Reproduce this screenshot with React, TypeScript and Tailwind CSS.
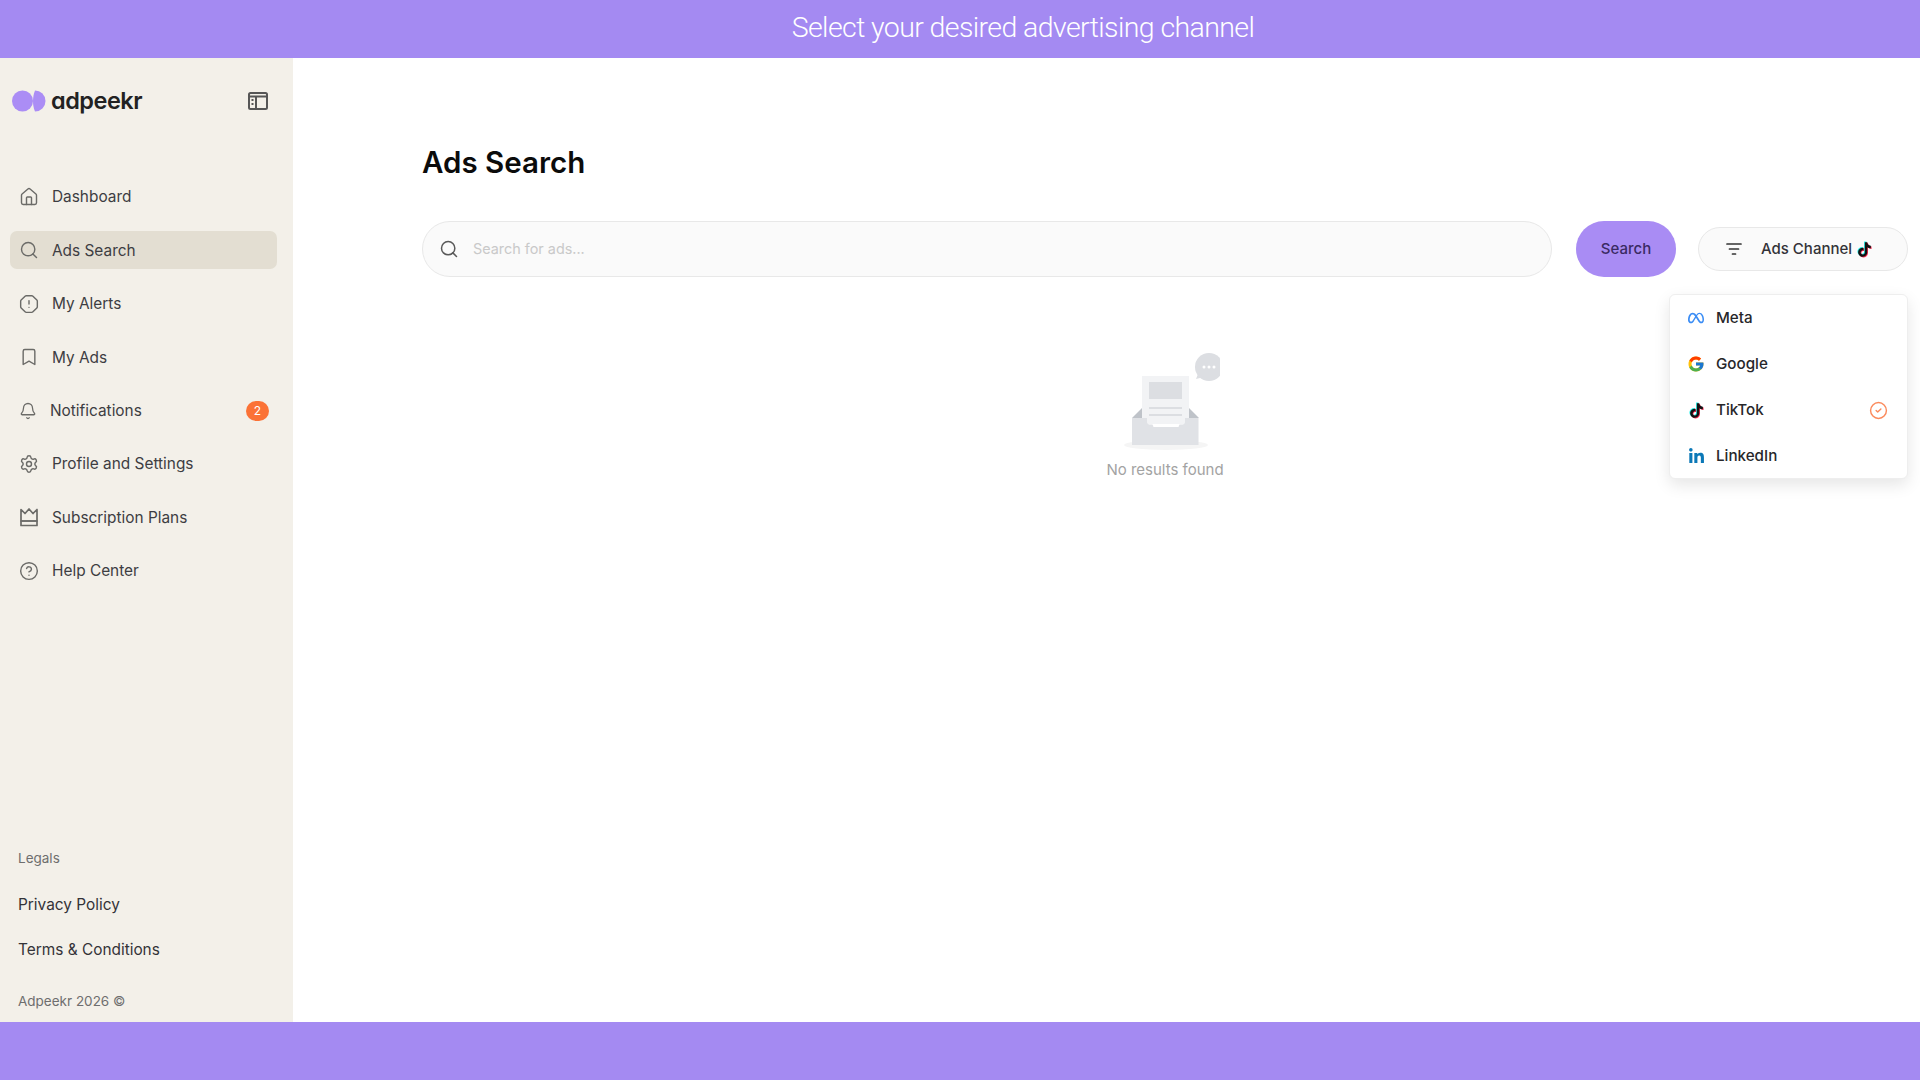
import React from 'react';
import { House, Search, OctagonAlert, Bookmark, Bell, Settings, CircleHelp, CircleCheck } from 'lucide-react';
import { FcGoogle } from 'react-icons/fc';
import { FaLinkedinIn } from 'react-icons/fa';
import { SiMeta } from 'react-icons/si';

const tiktokPath =
  'M12.525.02c1.31-.02 2.61-.01 3.91-.02.08 1.53.63 3.09 1.75 4.17 1.12 1.11 2.7 1.62 4.24 1.79v4.03c-1.44-.05-2.89-.35-4.2-.97-.57-.26-1.1-.59-1.62-.93-.01 2.92.01 5.84-.02 8.75-.08 1.4-.54 2.79-1.35 3.94-1.31 1.92-3.58 3.17-5.91 3.21-1.43.08-2.86-.31-4.08-1.03-2.02-1.19-3.44-3.37-3.65-5.71-.02-.5-.03-1-.01-1.49.18-1.9 1.12-3.72 2.58-4.96 1.66-1.44 3.98-2.13 6.15-1.72.02 1.48-.04 2.96-.04 4.44-.99-.32-2.15-.23-3.02.37-.63.41-1.11 1.04-1.36 1.75-.21.51-.15 1.07-.14 1.61.24 1.64 1.82 3.02 3.5 2.87 1.12-.01 2.19-.66 2.77-1.61.19-.33.4-.67.41-1.06.1-1.79.06-3.57.07-5.36.01-4.03-.01-8.05.02-12.07z';

const TikTokIcon = () => (
  <svg viewBox="-2 -2 28 28" className="w-[17px] h-[17px] shrink-0">
    <path d={tiktokPath} fill="#25f4ee" transform="translate(-1.2 -1)" />
    <path d={tiktokPath} fill="#fe2c55" transform="translate(1.2 1)" />
    <path d={tiktokPath} fill="#111111" />
  </svg>
);

const Logo = () => (
  <svg viewBox="0 0 34 22" className="w-[34px] h-[22px] shrink-0">
    <circle cx="10.5" cy="11" r="10.5" fill="#ab8df5" />
    <path d="M23 .5A10.500 10.500 0 0 1 23 21.500C21.500 18 21 14.500 21 11S21.500 4 23 .5z" fill="#ab8df5" />
  </svg>
);

const PanelIcon = () => (
  <svg viewBox="0 0 20 18" fill="none" className="w-[20px] h-[18px]" stroke="#565656" strokeWidth="2">
    <rect x="1" y="1" width="18" height="16" rx="1.500" />
    <path d="M1 4.500h18M8 4.500V17" />
    <path d="M3.500 8h2M3.500 12h2" />
  </svg>
);

const CrownBox = ({ className }: { className?: string }) => (
  <svg viewBox="0 0 20 20" fill="none" stroke="currentColor" strokeWidth="1.700" strokeLinejoin="round" className={className}>
    <path d="M2 2.500l4 4 4-4.500 4 4.500 4-4v11.500H2z" />
    <path d="M2 14h16v4.500H2z" />
  </svg>
);

const FilterIcon = () => (
  <svg viewBox="0 0 16 12" fill="none" stroke="#333333" strokeWidth="1.700" strokeLinecap="round" className="w-[16px] h-[12px]">
    <path d="M1 1h14M3.500 6h9M6.500 11h3" />
  </svg>
);

const EmptyIllustration = () => (
  <svg viewBox="-10 0 110 100" className="w-[110px] h-[100px]">
    <ellipse cx="46" cy="95" rx="42" ry="5" fill="#f5f5f5" />
    <circle cx="89" cy="17" r="14" fill="#dcdee2" />
    <path d="M78 24l-2 5 8-2z" fill="#dcdee2" />
    <circle cx="84" cy="17" r="1.500" fill="#ffffff" />
    <circle cx="89" cy="17" r="1.500" fill="#ffffff" />
    <circle cx="94" cy="17" r="1.500" fill="#ffffff" />
    <path d="M22 58L12 68h67L69 58z" fill="#bfc3c9" />
    <rect x="22" y="26" width="47" height="48" fill="#f2f3f5" />
    <rect x="29" y="32" width="33" height="17" fill="#dcdee2" />
    <rect x="29" y="57" width="33" height="2" fill="#dcdee2" />
    <rect x="29" y="64" width="33" height="2" fill="#dcdee2" />
    <path d="M12 68h15v4c0 1.500 1 2.500 2.500 2.500h3l1 2.500h25l1-2.500h3c1.500 0 2.500-1 2.500-2.500v-4h13.500v27H12z" fill="#e0e2e6" />
  </svg>
);

const navItems = [
  { label: 'Dashboard', icon: <House className="w-[20px] h-[20px]" strokeWidth={1.7} /> },
  { label: 'Ads Search', icon: <Search className="w-[20px] h-[20px]" strokeWidth={1.7} />, active: true },
  { label: 'My Alerts', icon: <OctagonAlert className="w-[20px] h-[20px]" strokeWidth={1.7} /> },
  { label: 'My Ads', icon: <Bookmark className="w-[20px] h-[20px]" strokeWidth={1.7} /> },
  { label: 'Notifications', icon: <Bell className="w-[18px] h-[18px]" strokeWidth={1.7} />, badge: 2 },
  { label: 'Profile and Settings', icon: <Settings className="w-[20px] h-[20px]" strokeWidth={1.7} /> },
  { label: 'Subscription Plans', icon: <CrownBox className="w-[20px] h-[20px]" /> },
  { label: 'Help Center', icon: <CircleHelp className="w-[20px] h-[20px]" strokeWidth={1.7} /> },
];

const channels = [
  { label: 'Meta', icon: <SiMeta className="w-[16px] h-[16px] text-[#3b8df5]" /> },
  { label: 'Google', icon: <FcGoogle className="w-[18px] h-[18px] ml-[-1px]" /> },
  { label: 'TikTok', icon: <TikTokIcon />, selected: true },
  { label: 'LinkedIn', icon: <FaLinkedinIn className="w-[17px] h-[17px] text-[#0b78b7]" /> },
];

const Sidebar = () => (
  <aside className="w-[293px] shrink-0 bg-[#f3f0e9] flex flex-col">
    <div className="flex items-center justify-between pl-[12px] pr-[25px] pt-[31px]">
      <div className="flex items-center gap-[5px]">
        <Logo />
        <span className="font-['Inter',sans-serif] [font-feature-settings:'cv11'] font-semibold text-[23.5px] leading-[24px] tracking-[-0.5px] text-[#222222]">adpeekr</span>
      </div>
      <PanelIcon />
    </div>

    <nav className="flex flex-col gap-[15.4px] mt-[65px] ml-[10px] mr-[16px]">
      {navItems.map((item) => (
        <div
          key={item.label}
          className={`h-[38px] flex items-center pl-[9px] pr-[8px] rounded-[7px] text-[15.4px] text-[#3d3d42] ${item.active ? 'bg-[#e3ded2]' : ''}`}
        >
          <span className="mr-[13px] shrink-0 text-[#6b6b68]">{item.icon}</span>
          <span className="flex-1">{item.label}</span>
          {item.badge && (
            <span className="w-[23px] h-[20px] rounded-full bg-[#fb7236] text-white text-[12px] flex items-center justify-center">{item.badge}</span>
          )}
        </div>
      ))}
    </nav>

    <div className="mt-auto px-[18px] pb-[11px] flex flex-col">
      <span className="text-[13.5px] leading-[20px] text-[#6e6e6e]">Legals</span>
      <span className="text-[15.4px] leading-[20px] text-[#333338] mt-[26.5px]">Privacy Policy</span>
      <span className="text-[15.4px] leading-[20px] text-[#333338] mt-[25px]">Terms &amp; Conditions</span>
      <span className="text-[13.5px] leading-[20px] text-[#6e6e6e] mt-[31.5px]">Adpeekr 2026 ©</span>
    </div>
  </aside>
);

const ChannelMenu = () => (
  <div className="absolute right-[12px] top-[236px] w-[239px] h-[185px] bg-white border border-[#eeeeee] rounded-[6px] shadow-[0_6px_16px_rgba(0,0,0,0.10)] flex flex-col justify-center gap-[18px] pl-[18px] pr-[18px] pt-[1px]">
    {channels.map((c) => (
      <div key={c.label} className="h-[28px] flex items-center text-[15.2px] font-medium text-[#27272a]">
        <span className="w-[28px] flex items-center">{c.icon}</span>
        <span className="flex-1">{c.label}</span>
        {c.selected && <CircleCheck className="w-[19px] h-[19px] text-[#fb8a5c] mr-[1px]" strokeWidth={1.8} />}
      </div>
    ))}
  </div>
);

const MainContent = () => (
  <main className="relative flex-1 bg-white pl-[129px] pr-[12px] pt-[84px]">
    <h1 className="text-[29.5px] leading-[40px] font-semibold text-[#0b0b0b]">Ads Search</h1>

    <div className="flex items-center mt-[39px]">
      <div className="w-[1130px] h-[56px] rounded-full bg-[#fafafa] border border-[#e8e8e8] flex items-center pl-[16px]">
        <Search className="w-[20px] h-[20px] text-[#595959]" strokeWidth={1.8} />
        <span className="ml-[14px] text-[14.4px] text-[#c9c9c9]">Search for ads...</span>
      </div>
      <button className="ml-[24px] w-[100px] h-[56px] rounded-full bg-[#a98cf4] text-[15px] font-medium text-[#3a2a63]">Search</button>
      <button className="ml-[22px] w-[210px] h-[44px] rounded-full bg-[#fafafa] border border-[#e8e8e8] flex items-center pl-[27px] text-[15px] font-medium text-[#333338]">
        <FilterIcon />
        <span className="ml-[19px] mr-[4px]">Ads Channel</span>
        <TikTokIcon />
      </button>
    </div>

    <div className="flex flex-col items-center mt-[73px]">
      <EmptyIllustration />
      <span className="mt-[10px] text-[15px] leading-[20px] text-[#a3a3a3]">No results found</span>
    </div>

    <ChannelMenu />
  </main>
);

export default function App() {
  return (
    <div className="w-[1920px] h-[1080px] flex flex-col overflow-hidden font-['Inter',sans-serif]">
      <header className="h-[58px] shrink-0 bg-[#a48af2] flex items-center justify-center pl-[126px] pb-[3px]">
        <span className="font-['Roboto',sans-serif] font-light text-[28.5px] tracking-[-0.6px] leading-[40px] text-white">Select your desired advertising channel</span>
      </header>
      <div className="flex-1 flex min-h-0">
        <Sidebar />
        <MainContent />
      </div>
      <div className="h-[58px] shrink-0 bg-[#a48af2]" />
    </div>
  );
}
